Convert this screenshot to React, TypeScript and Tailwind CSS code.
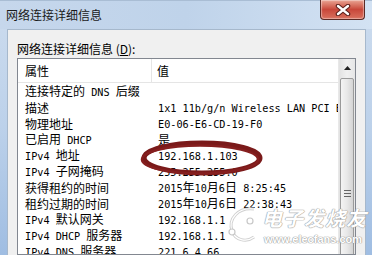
import React from "react";

const CJK = /[\u3000-\u9fff\uff00-\uffef]/;
function Mixed({ text }: { text: string }) {
  const parts = text.split(/([\u3000-\u9fff\uff00-\uffef]+)/).filter((p) => p.length > 0);
  return (
    <>
      {parts.map((p, i) =>
        CJK.test(p) ? (
          <span key={i} className="font-['Noto_Sans_CJK_SC',sans-serif] text-[12px] text-black">
            {p}
          </span>
        ) : (
          <span key={i} className="font-['DejaVu_Sans_Mono',monospace] text-[10.2px] whitespace-pre text-black">
            {p}
          </span>
        )
      )}
    </>
  );
}

const rows: [string, string][] = [
  ["连接特定的 DNS 后缀", ""],
  ["描述", "1x1 11b/g/n Wireless LAN PCI E"],
  ["物理地址", "E0-06-E6-CD-19-F0"],
  ["已启用 DHCP", "是"],
  ["IPv4 地址", "192.168.1.103"],
  ["IPv4 子网掩码", "255.255.255.0"],
  ["获得租约的时间", "2015年10月6日 8:25:45"],
  ["租约过期的时间", "2015年10月6日 22:38:43"],
  ["IPv4 默认网关", "192.168.1.1"],
  ["IPv4 DHCP 服务器", "192.168.1.1"],
  ["IPv4 DNS 服务器", "221.6.4.66"],
];

export default function App() {
  return (
    <div className="relative w-[372px] h-[255px] overflow-hidden flex flex-col bg-gradient-to-b from-[#cddcee] via-[#bcd1ea] to-[#9fbde2]">
      {/* title bar */}
      <div className="h-[29px] shrink-0 flex items-start justify-between border-t border-[#a9bdd4] bg-gradient-to-r from-[#c6d7ec] via-[#bfd3ea] to-[#d3e2f3]">
        <div className="ml-[6px] mt-[6px] leading-[16px] text-[12px] text-[#1a1a1a] font-['Noto_Sans_CJK_SC',sans-serif]">
          网络连接详细信息
        </div>
        <div className="mr-[7px] -mt-[1px] w-[45px] h-[20px] rounded-b-[4px] border border-t-0 border-[#5a2a25] bg-gradient-to-b from-[#e8a393] via-[#c8473a] to-[#d9705e] flex items-center justify-center shadow-[inset_0_0_1px_1px_rgba(255,255,255,0.4)]">
          <svg width="16" height="12" viewBox="0 0 16 12">
            <path d="M3 2 L13 10 M13 2 L3 10" stroke="#5a1f1a" strokeWidth="4.5" strokeLinecap="round" />
            <path d="M3 2 L13 10 M13 2 L3 10" stroke="#ffffff" strokeWidth="2.4" strokeLinecap="round" />
          </svg>
        </div>
      </div>

      {/* body */}
      <div className="flex-1 min-h-0 flex pl-[7px] pr-[6px]">
        <div className="flex-1 min-h-0 flex flex-col bg-[#f0f0f0] border-l border-t border-r border-[#a6b8cc] pl-[9px] pr-[9px] pt-[11px] overflow-hidden">
          <div className="h-[16px] shrink-0 leading-[16px] text-[12px] text-black font-['Noto_Sans_CJK_SC',sans-serif] mb-[1px]">
            网络连接详细信息 (<span className="underline">D</span>):
          </div>
          <div className="flex-1 min-h-0 flex bg-white border border-[#828790] overflow-hidden">
            <div className="flex-1 min-h-0 flex flex-col overflow-hidden">
              <div className="h-[24px] flex items-stretch border-b border-[#e5e5e5] shrink-0">
                <div className="w-[134px] pl-[7px] flex items-center border-r border-[#e5e5e5] text-[12px] font-['Noto_Sans_CJK_SC',sans-serif] text-black">
                  属性
                </div>
                <div className="pl-[5px] flex items-center text-[12px] font-['Noto_Sans_CJK_SC',sans-serif] text-black">
                  值
                </div>
              </div>
              {rows.map(([k, v], i) => (
                <div key={i} className="h-[16px] shrink-0 flex items-center">
                  <div className="w-[140px] pl-[7px] leading-[16px] whitespace-nowrap overflow-hidden">
                    <Mixed text={k} />
                  </div>
                  <div className="flex-1 leading-[16px] whitespace-nowrap overflow-hidden">
                    <Mixed text={v} />
                  </div>
                </div>
              ))}
            </div>
            {/* scrollbar */}
            <div className="w-[17px] shrink-0 flex flex-col bg-gradient-to-r from-[#e2e2e2] via-[#f0f0f0] to-[#e6e6e6] border-l border-[#e8e8e8]">
              <div className="h-[17px] shrink-0 flex items-center justify-center">
                <svg width="7" height="4" viewBox="0 0 7 4">
                  <path d="M0 4 L3.5 0 L7 4 Z" fill="#222" />
                </svg>
              </div>
              <div className="mt-[2px] mx-[1px] h-[230px] shrink-0 rounded-[2px] border border-[#9a9a9a] bg-gradient-to-r from-[#f4f4f4] via-[#e8e8e8] to-[#d4d4d4] flex flex-col items-center justify-center gap-[2px]">
                <div className="w-[7px] h-[1px] bg-[#666]" />
                <div className="w-[7px] h-[1px] bg-[#666]" />
                <div className="w-[7px] h-[1px] bg-[#666]" />
              </div>
            </div>
          </div>
        </div>
      </div>

      {/* red annotation ellipse */}
      <svg className="absolute left-0 top-0 pointer-events-none" width="372" height="255">
        <ellipse cx="202" cy="158" rx="58" ry="15" fill="none" stroke="#7a1a1a" strokeWidth="5" />
        <ellipse cx="200" cy="159.5" rx="58" ry="14" fill="none" stroke="#861f1f" strokeWidth="2.5" />
      </svg>

      {/* watermark */}
      <div className="absolute left-[224px] top-[203px] pointer-events-none">
        <svg width="40" height="44" viewBox="0 0 40 44">
          <path d="M30 6 C14 4 4 16 8 28 C11 37 22 40 30 34" fill="none" stroke="#d0d0d0" strokeWidth="3" />
          <path d="M30 6 C14 4 4 16 8 28 C11 37 22 40 30 34" fill="none" stroke="#ffffff" strokeWidth="1.2" />
          <circle cx="8" cy="29" r="3" fill="#fff" stroke="#c8c8c8" strokeWidth="1.2" />
          <circle cx="26" cy="18" r="3" fill="#fff" stroke="#c8c8c8" strokeWidth="1.2" />
        </svg>
      </div>
      <div className="absolute left-[262px] top-[207px] pointer-events-none italic font-bold text-[20px] leading-[22px] tracking-[1px] text-white font-['Noto_Sans_CJK_SC',sans-serif] [text-shadow:0_0_1px_#9a9a9a,0_0_1px_#9a9a9a,0_0_1px_#9a9a9a]">
        电子发烧友
      </div>
      <div className="absolute left-[264px] top-[233px] pointer-events-none font-bold text-[11px] leading-[13px] text-white font-['Liberation_Sans',sans-serif] [text-shadow:0_0_1px_#9a9a9a,0_0_1px_#9a9a9a,0_0_1px_#9a9a9a]">
        www.elecfans.com
      </div>
    </div>
  );
}
